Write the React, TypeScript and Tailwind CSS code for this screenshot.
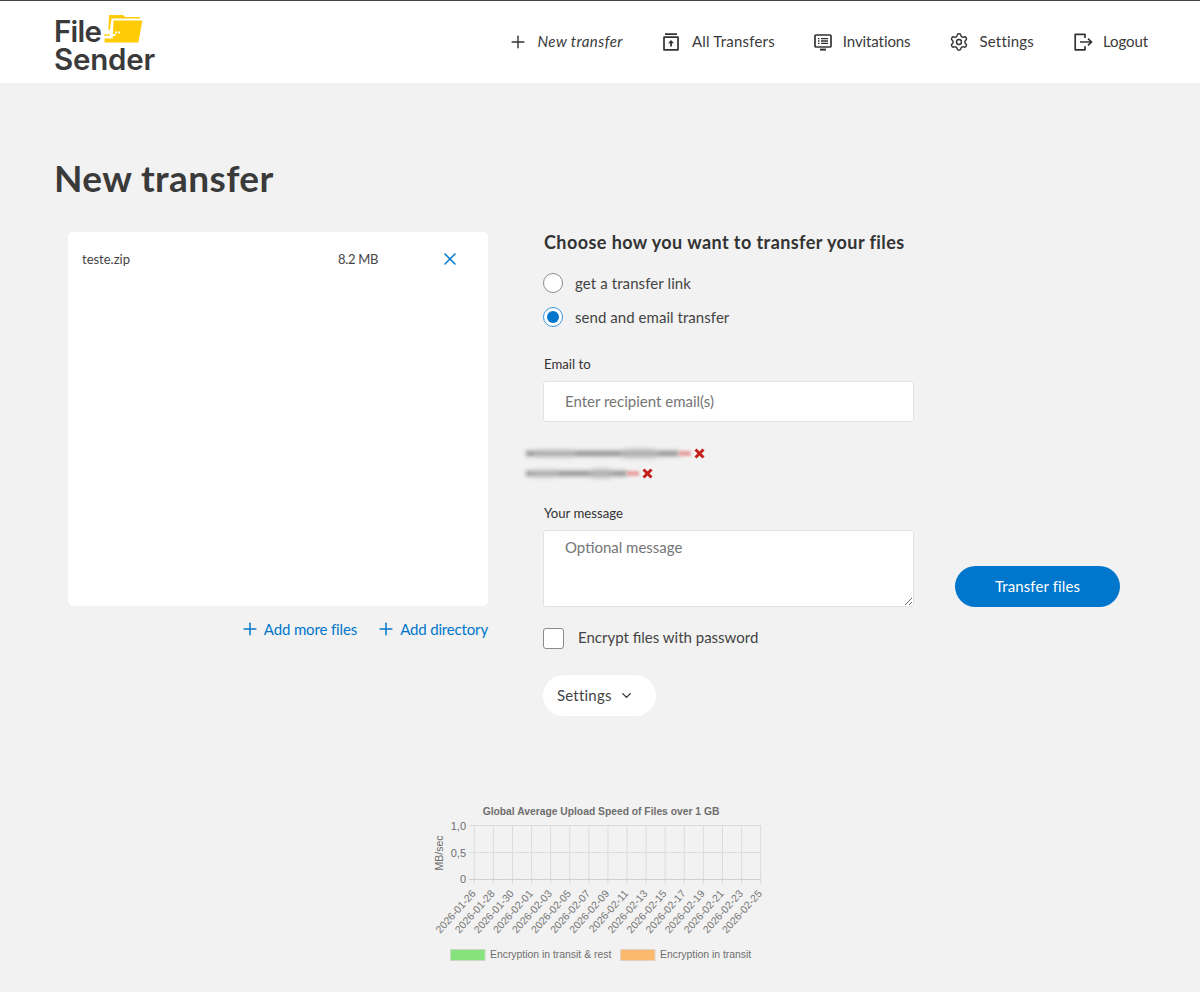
import React from "react";
import { Plus, X, Settings, ChevronDown } from "lucide-react";

const NUN = "font-['Lato','Noto_Sans',sans-serif]";

function UploadIcon() {
  return (
    <svg width="18" height="18" viewBox="0 0 18 18" fill="none" stroke="#333" strokeWidth="1.7">
      <path d="M3 1.2h12M2 4.2h14v12.6H2z" strokeLinejoin="round" />
      <path d="M9 13.5V8.5" strokeWidth="1.8" />
      <path d="M9 7 12 10.3H6z" fill="#333" stroke="none" />
    </svg>
  );
}
function InvitationIcon() {
  return (
    <svg width="18" height="18" viewBox="0 0 18 18" fill="none" stroke="#333" strokeWidth="1.7">
      <rect x="1" y="2" width="16" height="12" rx="1" />
      <path d="M6 16.6h6" strokeWidth="2" />
      <path d="M4 5.7h1.5M7 5.7h7M4 8h1.5M7 8h7M4 10.4h1.5M7 10.4h7" strokeWidth="1.3" />
    </svg>
  );
}
function LogoutIcon() {
  return (
    <svg width="19" height="18" viewBox="0 0 19 18" fill="none" stroke="#333" strokeWidth="1.7" strokeLinejoin="round">
      <path d="M11 5V1.4H1.2v15.4H11v-3.6" />
      <path d="M6 9h11.5M14 5.6 17.6 9 14 12.4" />
    </svg>
  );
}
function NavItem({ icon, label, cls }: { icon: React.ReactNode; label: string; cls: string }) {
  return (
    <div className={"flex items-center " + cls}>
      {icon}
      <span>{label}</span>
    </div>
  );
}
function Logo() {
  return (
    <div className="flex flex-col ml-[54px] mt-[4px] font-['Inter',sans-serif] font-semibold text-[29.5px] leading-[27px] text-[#3a3a3a]">
      <div className="flex items-end h-[29px]">
        <span className="leading-[27px] tracking-[-0.8px]">File</span>
        <svg className="ml-[3px]" width="40" height="32" viewBox="0 0 40 32">
          <path d="M5 2H19L21 4H36V5.4H7.6L5.8 17H4.4Z" fill="#ffcb05" />
          <path d="M9.5 7.5H38.4L34.4 29.6H0.5V25.6H8.8Z" fill="#ffcb05" />
          <rect x="0.5" y="21" width="2" height="2" fill="#ffcb05" />
          <rect x="3.5" y="21" width="2" height="2" fill="#ffcb05" />
          <rect x="8" y="21" width="3.4" height="2" fill="#fff" />
          <rect x="11" y="18.5" width="2" height="2" fill="#fff" />
          <rect x="14" y="18.5" width="2" height="2" fill="#fff" />
        </svg>
      </div>
      <span className="mt-[1px] tracking-[-0.2px]">Sender</span>
    </div>
  );
}
function Radio({ checked, label, cls }: { checked?: boolean; label: string; cls: string }) {
  return (
    <div className="flex items-center gap-[12px] h-5">
      <span className={"w-5 h-5 rounded-full bg-white border flex items-center justify-center " + (checked ? "border-[#3b93dc]" : "border-[#8a8a8a]")}>
        {checked && <span className="w-3 h-3 rounded-full bg-[#0077cc]" />}
      </span>
      <span className={"text-[15px] text-[#444] " + cls}>{label}</span>
    </div>
  );
}
function Redacted({ w, pink }: { w: number; pink: number }) {
  return (
    <div className="flex items-center h-5 ml-[-17px]">
      <div className="relative h-[5px] blur-[2px] bg-[#8c8c8c]" style={{ width: w }}>
        <span className="absolute left-[5%] top-[-2px] w-[28%] h-[9px] rounded-full bg-[#c4c4c4] opacity-50" />
        <span className="absolute left-[62%] top-[-3px] w-[24%] h-[11px] rounded-full bg-[#bdbdbd] opacity-60" />
      </div>
      <div className="h-[5px] blur-[1.5px] bg-[#e8a0a0]" style={{ width: pink }} />
      <svg className="ml-[3px]" width="11" height="11" viewBox="0 0 11 11" stroke="#c4201c" strokeWidth="3">
        <path d="M1.5 1.5 9.5 9.5M9.5 1.5 1.5 9.5" />
      </svg>
    </div>
  );
}
function Chart() {
  const x0 = 54.3;
  const step = 19.09;
  const dates = ["2026-01-26","2026-01-28","2026-01-30","2026-02-01","2026-02-03","2026-02-05","2026-02-07","2026-02-09","2026-02-11","2026-02-13","2026-02-15","2026-02-17","2026-02-19","2026-02-21","2026-02-23","2026-02-25"];
  return (
    <svg className="block mx-auto mt-[79px]" width="360" height="175" viewBox="0 0 360 175" fontFamily="'Liberation Sans',Arial,sans-serif" fill="#6e6e6e">
      <text x="181" y="19.5" textAnchor="middle" fontSize="10.3" fontWeight="700">Global Average Upload Speed of Files over 1 GB</text>
      {dates.map((d, i) => {
        const x = x0 + i * step;
        return (
          <g key={d}>
            <path d={`M${x} 30.5V89`} stroke="#dcdcdc" />
            <text transform={`translate(${x + 2} 99) rotate(-48)`} textAnchor="end" fontSize="10.5" fill="#777">{d}</text>
          </g>
        );
      })}
      {[30.5, 57.5, 84.5].map((y) => (
        <path key={y} d={`M49 ${y}H340.7`} stroke={y === 84.5 ? "#cfcfcf" : "#dcdcdc"} />
      ))}
      <text x="46" y="34.5" textAnchor="end" fontSize="11">1,0</text>
      <text x="46" y="61.5" textAnchor="end" fontSize="11">0,5</text>
      <text x="46" y="88" textAnchor="end" fontSize="11">0</text>
      <text transform="translate(22.5 58) rotate(-90)" textAnchor="middle" fontSize="10.5">MB/sec</text>
      <rect x="30.5" y="154.5" width="34.5" height="11" fill="#86e27c" stroke="#c9d9c6" />
      <text x="70" y="163" fontSize="10.4">Encryption in transit &amp; rest</text>
      <rect x="200.5" y="154.5" width="34.5" height="11" fill="#fbb86f" stroke="#dfd2c3" />
      <text x="240" y="163" fontSize="10.4">Encryption in transit</text>
    </svg>
  );
}

export default function App() {
  return (
    <div className={"min-h-[992px] bg-[#f2f2f2] text-[#3a3a3a] " + NUN}>
      <header className="h-[83px] bg-white border-t border-[#444] flex items-center justify-between pr-[52px]">
        <Logo />
        <nav className="flex items-center gap-10 mt-[-1px] text-[15px] text-[#3a3a3a]">
          <NavItem cls="gap-[9px] italic tracking-[0.45px] mr-[-1px]" icon={<Plus size={20} color="#333" strokeWidth={1.7} />} label="New transfer" />
          <NavItem cls="gap-3 tracking-[0.2px]" icon={<UploadIcon />} label="All Transfers" />
          <NavItem cls="gap-[11px] tracking-[-0.1px] ml-[-1px]" icon={<InvitationIcon />} label="Invitations" />
          <NavItem cls="gap-[10px] tracking-[0.2px] ml-[-1px]" icon={<Settings size={20} color="#333" strokeWidth={1.7} />} label="Settings" />
          <NavItem cls="gap-[10px] tracking-[-0.1px]" icon={<LogoutIcon />} label="Logout" />
        </nav>
      </header>

      <h1 className="ml-[54px] mt-[73px] text-[37px] leading-[44px] font-bold tracking-[0.4px] text-[#3a3a3a]">New transfer</h1>

      <div className="flex mt-[32px] ml-[68px]">
        <div className="w-[420px]">
          <div className="h-[374px] bg-white rounded-[5px]">
            <div className="flex items-center pl-[14px] pt-[17px] text-[13px] text-[#444] leading-[18px]">
              <span className="w-[256px]">teste.zip</span>
              <span className="w-[102px] tracking-[-0.3px]">8.2 MB</span>
              <X size={20} color="#0077cc" strokeWidth={1.8} />
            </div>
          </div>
          <div className="flex justify-end gap-[19px] mt-[13px] text-[15px] leading-5 text-[#0077cc]">
            <div className="flex items-center gap-[4px] tracking-[-0.13px]"><Plus size={20} strokeWidth={1.8} />Add more files</div>
            <div className="flex items-center gap-[4px] tracking-[-0.16px]"><Plus size={20} strokeWidth={1.8} />Add directory</div>
          </div>
        </div>

        <div className="w-[371px] ml-[55px]">
          <h2 className="h-5 ml-px text-[18px] leading-[20px] pt-0 font-bold text-[#333] tracking-[0.43px] mt-[-0.5px]">Choose how you want to transfer your files</h2>
          <div className="mt-[21.5px]"><Radio cls="tracking-[0.1px]" label="get a transfer link" /></div>
          <div className="mt-[14px]"><Radio cls="tracking-[0.05px]" checked label="send and email transfer" /></div>

          <label className="block mt-[27px] ml-px h-5 text-[13.2px] leading-5 text-[#333]">Email to</label>
          <input
            className="block mt-[7px] w-full h-[41px] bg-white border border-[#e2e2e2] rounded-[3px] pl-[21px] pb-[2px] text-[15px] placeholder:text-[#757575] outline-none"
            placeholder="Enter recipient email(s)"
          />
          <div className="mt-[21px]"><Redacted w={153} pink={12} /></div>
          <Redacted w={101} pink={12} />

          <label className="block mt-[20px] ml-px h-5 text-[13.2px] leading-5 text-[#333]">Your message</label>
          <textarea
            className="block mt-[7px] w-full h-[77px] bg-white border border-[#e2e2e2] rounded-[3px] pl-[21px] pt-[5px] text-[15px] placeholder:text-[#757575] outline-none"
            placeholder="Optional message"
          />
          <div className="flex items-center gap-[14px] mt-[21px] h-5">
            <span className="w-[21px] h-[21px] bg-white border border-[#8a8a8a] rounded-[3px]" />
            <span className="text-[15px] text-[#444] mt-[-2px]">Encrypt files with password</span>
          </div>
          <div className="flex items-center gap-[7px] pl-[14px] mt-[27px] w-[113px] h-[41px] bg-white rounded-full text-[15px] text-[#444] tracking-[0.2px]">
            Settings <ChevronDown size={15} color="#333" strokeWidth={2.2} />
          </div>
        </div>

        <div className="ml-[41px] mt-[334px] w-[165px] h-[41px] pb-[1px] rounded-full bg-[#0077cc] text-white text-[15px] tracking-[0.1px] flex items-center justify-center">
          Transfer files
        </div>
      </div>

      <Chart />
    </div>
  );
}
